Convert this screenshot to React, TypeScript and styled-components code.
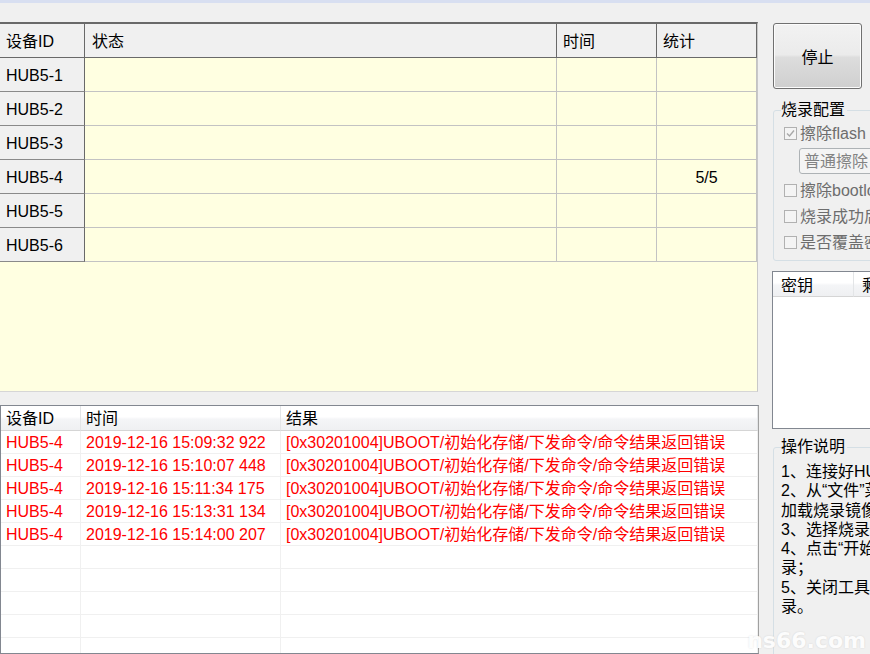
import React from "react";
import styled, { createGlobalStyle } from "styled-components";

const Global = createGlobalStyle`
  html, body {
    margin: 0;
    padding: 0;
    background: #f0f0f0;
  }
  body {
    font-family: "Liberation Sans", "Noto Sans CJK SC", sans-serif;
    font-size: 16px;
    color: #000;
  }
`;

const Window = styled.div`
  position: relative;
  width: 870px;
  height: 654px;
  overflow: hidden;
  box-sizing: border-box;
  background: #f0f0f0;
  border-top: 3px solid #d8dff1;
`;

const Body = styled.div`
  display: flex;
  gap: 13px;
  padding-top: 19px;
  height: 100%;
  box-sizing: border-box;
`;

const LeftCol = styled.div`
  flex: none;
  width: 759px;
  display: flex;
  flex-direction: column;
  gap: 13px;
`;

const Grid = styled.div`
  width: 758px;
  height: 370px;
  flex: none;
  box-sizing: border-box;
  background: #ffffe1;
  border-top: 2px solid #696969;
  border-right: 1px solid #c8c8c8;
  border-bottom: 1px solid #d6d6d6;
  display: grid;
  grid-template-columns: 85px 472px 100px 100px;
  grid-auto-rows: 34px;
  align-content: start;
`;

const HeadCell = styled.div<{ $pad?: number }>`
  display: flex;
  align-items: center;
  padding: 2px 0 0 ${(p) => p.$pad ?? 6}px;
  background: #f0f0f0;
  border-right: 1px solid #696969;
  border-bottom: 1px solid #696969;
  line-height: 18px;
`;

const RowHead = styled.div`
  display: flex;
  align-items: center;
  padding: 2px 0 0 6px;
  background: #f0f0f0;
  border-right: 1px solid #696969;
  border-bottom: 1px solid #8a8a8a;
  line-height: 18px;
`;

const DataCell = styled.div<{ $center?: boolean }>`
  display: flex;
  align-items: center;
  justify-content: ${(p) => (p.$center ? "center" : "flex-start")};
  padding-top: 2px;
  border-right: 1px solid #c3c3c3;
  border-bottom: 1px solid #c3c3c3;
  line-height: 18px;
`;

const LogList = styled.div`
  flex: 1;
  width: 759px;
  box-sizing: border-box;
  background: #fff;
  border: 1px solid #828790;
  border-right-color: #a0a0a0;
  display: grid;
  grid-template-columns: 80px 200px 1fr;
  grid-template-rows: 25px;
  grid-auto-rows: 23px;
  align-content: start;
  overflow: hidden;
`;

const LogHead = styled.div`
  display: flex;
  align-items: center;
  padding: 2px 0 0 5px;
  white-space: nowrap;
  background: linear-gradient(#ffffff 0%, #ffffff 45%, #f4f5f7 55%, #eff0f2 100%);
  border-right: 1px solid #e3e5e7;
  border-bottom: 1px solid #d5d5d5;
  line-height: 18px;
`;

const LogCell = styled.div`
  display: flex;
  align-items: center;
  padding: 2px 0 0 5px;
  white-space: nowrap;
  color: #ff0000;
  border-right: 1px solid #f0f0f0;
  border-bottom: 1px solid #f0f0f0;
  line-height: 18px;
`;

const RightCol = styled.div`
  flex: none;
  width: 140px;
  display: flex;
  flex-direction: column;
  align-items: flex-start;
`;

const StopButton = styled.button`
  flex: none;
  margin: 1px 0 0 1px;
  width: 89px;
  height: 66px;
  box-sizing: border-box;
  border: 1px solid #707070;
  border-radius: 3px;
  box-shadow: inset 0 0 0 1px #fcfcfc;
  background: linear-gradient(#f2f2f2 0%, #ebebeb 48%, #dddddd 52%, #cfcfcf 100%);
  font: inherit;
  color: #000;
  padding: 0;
`;

const GroupBox = styled.fieldset<{ $top: number; $height?: number }>`
  margin: ${(p) => p.$top}px 0 0 1px;
  width: 130px;
  ${(p) => (p.$height ? `height: ${p.$height}px;` : "")}
  box-sizing: border-box;
  border: 1px solid #d5dfe5;
  border-radius: 3px;
  padding: 1px 0 5px 7px;
  display: flex;
  flex-direction: column;
  align-items: flex-start;
  white-space: nowrap;
  flex: none;
`;

const Legend = styled.legend`
  padding: 0 2px 0 0;
  line-height: 18px;
`;

const CheckRow = styled.label`
  display: flex;
  align-items: center;
  height: 26px;
  padding: 1px 0 0 3px;
  box-sizing: border-box;
  gap: 3px;
  color: #6d6d6d;
  line-height: 18px;
`;

const Box = styled.span`
  width: 11px;
  height: 11px;
  flex: none;
  border: 1px solid #b1b1b1;
  background: #f4f4f4;
  display: flex;
  align-items: center;
  justify-content: center;
`;

const EraseButton = styled.button`
  margin: 2px 0 3px 18px;
  width: 90px;
  height: 26px;
  box-sizing: border-box;
  border: 1px solid #adb2b5;
  border-radius: 3px;
  background: #f4f4f4;
  color: #838383;
  font: inherit;
  text-align: left;
  padding: 1px 0 0 4px;
  line-height: 18px;
`;

const KeyList = styled.div`
  margin-top: 10px;
  width: 130px;
  height: 158px;
  flex: none;
  box-sizing: border-box;
  background: #fff;
  border: 1px solid #828790;
  display: grid;
  grid-template-columns: 81px 1fr;
  grid-template-rows: 25px;
  align-content: start;
`;

const KeyHead = styled.div`
  display: flex;
  align-items: center;
  padding: 3px 0 0 8px;
  white-space: nowrap;
  overflow: hidden;
  background: linear-gradient(#ffffff 0%, #ffffff 45%, #f4f5f7 55%, #eff0f2 100%);
  border-right: 1px solid #e3e5e7;
  border-bottom: 1px solid #d5d5d5;
  line-height: 18px;
`;

const HelpText = styled.div`
  padding-top: 5px;
  line-height: 19.3px;
`;

const HelpLine = styled.div`
  white-space: nowrap;
`;

const Watermark = styled.span`
  position: absolute;
  right: 4px;
  bottom: 1px;
  font-family: "DejaVu Sans", sans-serif;
  font-weight: bold;
  font-size: 22px;
  line-height: 24px;
  color: rgba(255, 255, 255, 0.95);
  text-shadow: 0 0 2px rgba(0, 0, 0, 0.12);
`;

const Check = ({ checked }: { checked?: boolean }) => (
  <Box>
    {checked && (
      <svg width="9" height="9" viewBox="0 0 9 9">
        <path d="M1 4.5 L3.5 7 L8 1.5" fill="none" stroke="#a8a8a8" strokeWidth="1.4" />
      </svg>
    )}
  </Box>
);

const devices = ["HUB5-1", "HUB5-2", "HUB5-3", "HUB5-4", "HUB5-5", "HUB5-6"];
const stats: Record<string, string> = { "HUB5-4": "5/5" };

const logs = [
  "2019-12-16 15:09:32 922",
  "2019-12-16 15:10:07 448",
  "2019-12-16 15:11:34 175",
  "2019-12-16 15:13:31 134",
  "2019-12-16 15:14:00 207",
];
const errorText = "[0x30201004]UBOOT/初始化存储/下发命令/命令结果返回错误";

const helpLines = [
  "1、连接好HUB设备；",
  "2、从“文件”菜单中",
  "加载烧录镜像文件；",
  "3、选择烧录配置；",
  "4、点击“开始”进行烧",
  "录；",
  "5、关闭工具前请停止烧",
  "录。",
];

export default function App() {
  const emptyRows = 5;
  return (
    <>
      <Global />
      <Window>
        <Body>
          <LeftCol>
            <Grid>
              <HeadCell>设备ID</HeadCell>
              <HeadCell $pad={7}>状态</HeadCell>
              <HeadCell>时间</HeadCell>
              <HeadCell>统计</HeadCell>
              {devices.map((d) => (
                <React.Fragment key={d}>
                  <RowHead>{d}</RowHead>
                  <DataCell />
                  <DataCell />
                  <DataCell $center>{stats[d] ?? ""}</DataCell>
                </React.Fragment>
              ))}
            </Grid>
            <LogList>
              <LogHead>设备ID</LogHead>
              <LogHead>时间</LogHead>
              <LogHead>结果</LogHead>
              {logs.map((t) => (
                <React.Fragment key={t}>
                  <LogCell>HUB5-4</LogCell>
                  <LogCell>{t}</LogCell>
                  <LogCell>{errorText}</LogCell>
                </React.Fragment>
              ))}
              {Array.from({ length: emptyRows }).map((_, i) => (
                <React.Fragment key={i}>
                  <LogCell />
                  <LogCell />
                  <LogCell />
                </React.Fragment>
              ))}
            </LogList>
          </LeftCol>
          <RightCol>
            <StopButton>停止</StopButton>
            <GroupBox $top={12}>
              <Legend>烧录配置</Legend>
              <CheckRow>
                <Check checked />
                擦除flash
              </CheckRow>
              <EraseButton disabled>普通擦除</EraseButton>
              <CheckRow>
                <Check />
                擦除bootloader
              </CheckRow>
              <CheckRow>
                <Check />
                烧录成功后断电
              </CheckRow>
              <CheckRow>
                <Check />
                是否覆盖密钥
              </CheckRow>
            </GroupBox>
            <KeyList>
              <KeyHead>密钥</KeyHead>
              <KeyHead>剩余次数</KeyHead>
            </KeyList>
            <GroupBox $top={9} $height={240}>
              <Legend>操作说明</Legend>
              <HelpText>
                {helpLines.map((l, i) => (
                  <HelpLine key={i}>{l}</HelpLine>
                ))}
              </HelpText>
            </GroupBox>
          </RightCol>
        </Body>
        <Watermark>ns66.com</Watermark>
      </Window>
    </>
  );
}
